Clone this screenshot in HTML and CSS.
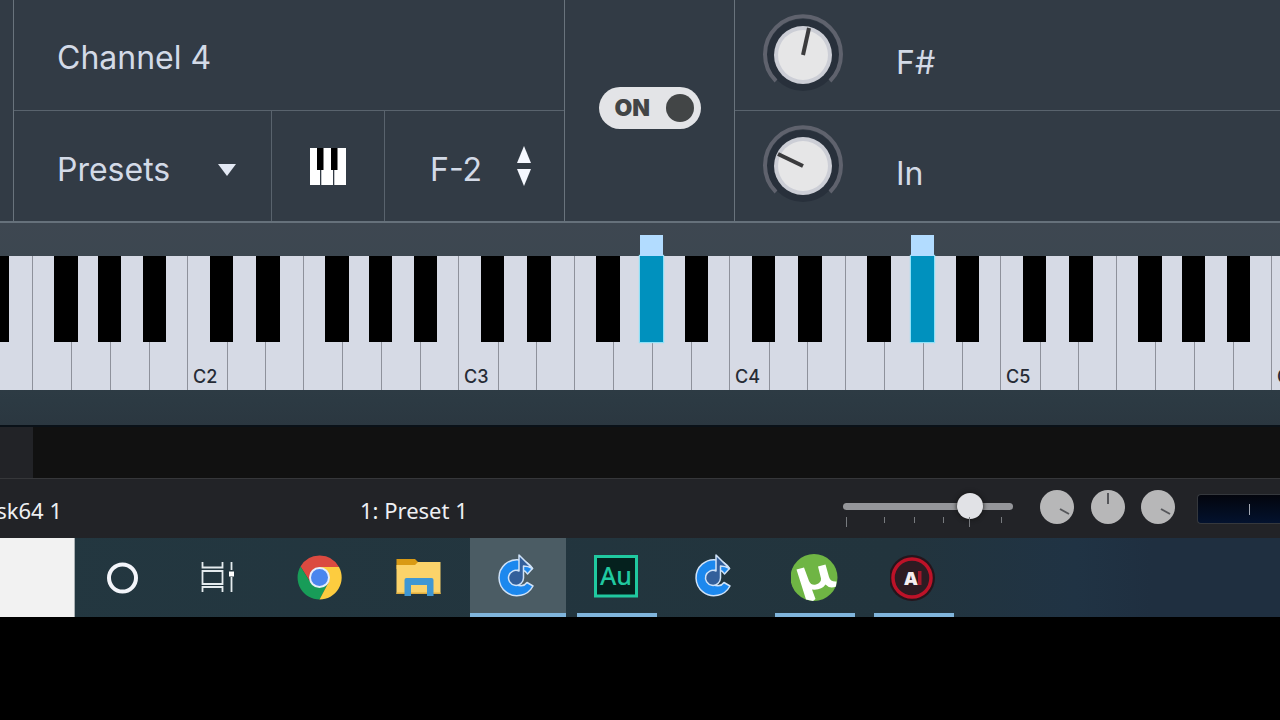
FILE: index.html
```html
<!DOCTYPE html>
<html lang="en">
<head>
<meta charset="utf-8">
<title>Channel 4</title>
<link rel="stylesheet" href="styles.css">
</head>
<body>
<main class="screen">
  <section class="panel">
    <div class="channel">
      <h1 class="channel-name">Channel 4</h1>
      <div class="channel-tools">
        <div class="presets">
          <select class="presets-select" aria-label="Presets"><option>Presets</option></select>
          <svg class="presets-arrow" viewBox="0 0 18 12" aria-hidden="true"><path d="M0 0H18L9 12Z"/></svg>
        </div>
        <button class="keys-button" aria-label="Keyboard">
          <svg width="36" height="37" viewBox="0 0 36 37"><path fill="#fff" d="M0 0H36V37H0Z"/><path fill="#323b45" d="M10 22h1.300v15H10zM23 22h1.300v15H23z"/><path d="M7 0h6.500v22H7zM21 0h6.500v22H21z"/></svg>
        </button>
        <div class="note">
          <input class="note-input" aria-label="Lowest note" value="F-2">
          <div class="stepper">
            <button class="step" aria-label="Note up"><svg width="14" height="17" viewBox="0 0 14 17"><path d="M7 0L14 17H0Z"/></svg></button>
            <button class="step" aria-label="Note down"><svg width="14" height="17" viewBox="0 0 14 17"><path d="M0 0H14L7 17Z"/></svg></button>
          </div>
        </div>
      </div>
    </div>
    <div class="power">
      <label class="switch"><input class="switch-box" type="checkbox" checked><span>ON</span><span class="switch-dot"></span></label>
    </div>
    <div class="dials">
      <div class="dial-row">
        <div class="dial">
          <svg width="82" height="82" viewBox="0 0 82 82" aria-hidden="true">
            <circle cx="41" cy="41" r="36" fill="#28303b"/>
            <path d="M14 67A38 38 0 1 1 68 67" fill="none" stroke="#5f626d" stroke-width="4"/>
            <circle cx="41" cy="41" r="29" fill="#ccced6"/><circle cx="41" cy="41" r="25" fill="#e6e6e7"/>
            <path d="M41 41L47 14" stroke="#3b3b3d" stroke-width="4"/>
          </svg>
          <input class="dial-input" id="key" type="range" min="0" max="11" value="6">
        </div>
        <label class="dial-text" for="key">F#</label>
      </div>
      <div class="dial-row">
        <div class="dial">
          <svg width="82" height="82" viewBox="0 0 82 82" aria-hidden="true">
            <circle cx="41" cy="41" r="36" fill="#28303b"/>
            <path d="M14 67A38 38 0 1 1 68 67" fill="none" stroke="#5f626d" stroke-width="4"/>
            <circle cx="41" cy="41" r="29" fill="#ccced6"/><circle cx="41" cy="41" r="25" fill="#e6e6e7"/>
            <path d="M41 41L16 29" stroke="#3b3b3d" stroke-width="4"/>
          </svg>
          <input class="dial-input" id="mode" type="range" value="20">
        </div>
        <label class="dial-text" for="mode">In</label>
      </div>
    </div>
  </section>

  <section class="keybed" aria-label="Piano"><div class="keys" id="keys"></div></section>

  <div class="backdrop"><div class="backdrop-side"></div></div>

  <section class="status">
    <span class="status-name">sk64 1</span>
    <span class="status-preset">1: Preset 1</span>
    <div class="volume">
      <input class="volume-input" type="range" min="0" max="100" value="79" aria-label="Volume">
      <svg class="volume-ticks" width="170" height="10" viewBox="0 0 170 10" aria-hidden="true"><path d="M3.500 0v10M41.500 0v6M71.500 0v6M100.500 0v6M126.500 0v10M158.500 0v6" stroke="#777a7e"/></svg>
    </div>
    <div class="mini-dials">
      <button class="mini" aria-label="Gain"><svg width="34" height="34" viewBox="0 0 34 34"><path d="M20 19L29 24"/></svg></button>
      <button class="mini" aria-label="Pan"><svg width="34" height="34" viewBox="0 0 34 34"><path d="M17 3V14"/></svg></button>
      <button class="mini" aria-label="Send"><svg width="34" height="34" viewBox="0 0 34 34"><path d="M20 19L29 24"/></svg></button>
    </div>
    <div class="meter"><span class="meter-mark"></span></div>
  </section>

  <nav class="taskbar" aria-label="Taskbar">
    <input class="search" aria-label="Search">
    <div class="tasks">
      <button class="task" aria-label="Cortana"><svg viewBox="0 0 48 48"><circle cx="24.500" cy="25" r="13.500" fill="none" stroke="#f3f5fa" stroke-width="4"/></svg></button>
      <button class="task" aria-label="Task view"><svg viewBox="0 0 48 48"><path fill="none" stroke="#e4ebee" stroke-width="1.800" d="M5.500 9v5.500H25.500V9M5.500 18H25.500V31H5.500ZM5.500 39v-5H25.500V39M34.500 9V17M34.500 24V39"/><path fill="#fff" d="M32 18.500h5v5h-5z"/></svg></button>
      <button class="task" aria-label="Chrome"><svg viewBox="0 0 48 48"><g transform="translate(23.500 24.500)"><path fill="#db4a40" d="M-19-11A22 22 0 0 1 19.500-10.500L0-10.500L-9 5Z"/><path fill="#189c58" d="M-19-11A22 22 0 0 0 0 22L9 5L-9 5Z"/><path fill="#fdcc3f" d="M19.500-10.500A22 22 0 0 1 0 22L9 5L0-10.500Z"/><circle r="10.500" fill="#e6eefa"/><circle r="8.500" fill="#4a86ee"/></g></svg></button>
      <button class="task" aria-label="File Explorer"><svg viewBox="0 0 48 48"><path fill="#d99a14" d="M1.500 6H20l3 3v7H1.500z"/><path fill="#fbd36a" d="M1.500 12H20l3-3H45.500V41H1.500z"/><path fill="#e0ad3e" d="M1.500 39.500h44V41h-44z"/><path fill="#3f97d3" d="M9.500 43V27q0-2 2-2h25q2 0 2 2V43H32V32H16V43z"/></svg></button>
      <button class="task task-active task-running" aria-label="Cakewalk"><svg viewBox="0 0 48 48"><g stroke="#cfe2f8" stroke-width="1.500" stroke-linejoin="round"><path fill="#1c88ee" d="M39 33A18 18 0 1 1 38.500 15.500L33.500 21A8 8 0 1 0 33 29.500Z"/><path fill="#335f9b" d="M25 2L38.500 15.500Q34 13 29.500 13V25A7.500 7.500 0 1 1 25 18Z"/></g></svg></button>
      <button class="task task-running" aria-label="Audition"><svg viewBox="0 0 48 48"><path fill="#05211e" stroke="#20c9a0" stroke-width="3" d="M2.500 3.500H43.500V43H2.500z"/><text class="audition" x="23" y="32" text-anchor="middle">Au</text></svg></button>
      <button class="task" aria-label="Cakewalk project"><svg viewBox="0 0 48 48"><g transform="translate(-1 0)" stroke="#cfe2f8" stroke-width="1.500" stroke-linejoin="round"><path fill="#1c88ee" d="M39 33A18 18 0 1 1 38.500 15.500L33.500 21A8 8 0 1 0 33 29.500Z"/><path fill="#335f9b" d="M25 2L38.500 15.500Q34 13 29.500 13V25A7.500 7.500 0 1 1 25 18Z"/></g></svg></button>
      <button class="task task-running" aria-label="uTorrent"><svg viewBox="0 0 48 48"><circle cx="23" cy="24.500" r="23.500" fill="#6fb544"/><path fill="#fff" d="M5.500 16.500L13 14.500L18 28Q20.500 33 25 31.500Q30.500 29.500 30 25.500L27 13.500L34.500 11.500L38 24Q39.500 29 45.500 28.500L45 33.500Q38.500 36 34.500 31.500Q30.500 37.500 21 36.500L24.500 46L22 48L15 46.500Z"/></svg></button>
      <button class="task task-running" aria-label="Recorder"><svg viewBox="0 0 48 48"><circle cx="22" cy="25" r="23" fill="#25151c"/><circle cx="22" cy="25" r="19" fill="#2d1b22" stroke="#bd1228" stroke-width="3.500"/><path fill="#a3182a" d="M28 18h3.500v14H28z"/><text class="recorder" x="21" y="32" text-anchor="middle">A</text></svg></button>
    </div>
  </nav>
</main>
<script src="piano.js"></script>
</body>
</html>
```
FILE: styles.css
```css
* { box-sizing: border-box; }
body { margin: 0; background: #000; }
button, input, select { font: inherit; color: inherit; margin: 0; padding: 0; border: 0; border-radius: 0; background: none; appearance: none; outline: 0; }
svg { display: block; }

.screen { min-height: 100vh; overflow: hidden; background: #000; }

.panel {
  display: grid;
  grid-template-columns: 551px 170px 1fr;
  padding-left: 13px;
  background: #323b45;
  border-bottom: 2px solid #66717b;
  color: #d3dae7;
  font: 400 32px/40px Inter, "Open Sans", sans-serif;
}
.channel, .power, .dials { border-left: 1px solid #69737c; }
.channel-name { margin: 0; padding: 38px 43px 32px; font-size: 32px; font-weight: 400; line-height: 40px; }
.channel-tools { display: grid; grid-template-columns: 257px 113px minmax(0, 1fr); height: 111px; border-top: 1px solid #59636d; }
.presets { display: flex; align-items: center; padding: 8px 35px 0 43px; }
.presets-select { flex: 1; height: 40px; }
.presets-arrow { width: 18px; height: 12px; fill: #e3e9f4; }
.keys-button { display: flex; align-items: center; justify-content: center; border-left: 1px solid #59636d; }
.note { display: flex; align-items: center; border-left: 1px solid #59636d; padding: 8px 33px 0 45px; }
.note-input { flex: 1; min-width: 0; height: 40px; }
.stepper { flex: none; display: flex; flex-direction: column; gap: 6px; padding-bottom: 8px; }
.step { fill: #f5f8ff; }

.power { display: flex; align-items: center; justify-content: center; padding-bottom: 6px; }
.switch { display: flex; align-items: center; justify-content: space-between; width: 102px; height: 42px; padding: 0 7px 0 16px; border-radius: 21px; background: #e3e4e7; color: #424546; font-size: 23px; font-weight: 900; }
.switch-box { position: absolute; opacity: 0; }
.switch-dot { width: 28px; height: 28px; border-radius: 50%; background: #424546; }

.dial-row { display: flex; align-items: center; gap: 52px; height: 110px; padding-left: 27px; }
.dial-row + .dial-row { height: 111px; border-top: 1px solid #59636d; }
.dial { position: relative; }
.dial-input { position: absolute; inset: 0; width: 100%; opacity: 0; }
.dial-text { padding-top: 16px; }

.keybed { padding: 33px 0 35px; background: linear-gradient(#3e4751, #3c4750 20%, #2c3a43 88%, #2b3740); }
.keys { display: flex; margin-left: -84px; }
.octave { position: relative; flex: none; display: grid; grid-template-columns: 40px 38px 38px 39px 39px 39px 38px; height: 134px; }
.white { display: flex; align-items: flex-end; padding: 0 0 2px 5px; background: #d6dae5; border-left: 1px solid #8e919b; color: #262b35; font: 500 18px/22px Inter, "Open Sans", sans-serif; }
.black { position: absolute; top: 0; width: 23px; height: 86px; background: #000; }
.black-wide { width: 24px; }
.black-cs { left: 23px; }
.black-ds { left: 69px; }
.black-fs { left: 138px; }
.black-gs { left: 182px; }
.black-as { left: 227px; }
.pressed { background: #0091be; box-shadow: 0 0 1px 1px #8fe1f8; }
.pressed::before { content: ""; position: absolute; left: 0; bottom: 100%; width: 100%; height: 21px; background: #b2dcff; }

.backdrop { height: 53px; background: #111; border-top: 2px solid #0a1118; }
.backdrop-side { width: 33px; height: 100%; background: #222327; }

.status { display: grid; grid-template-columns: 360px 1fr 170px 135px 132px; height: 60px; background: #222327; border-top: 1px solid #36373a; color: #eef0f3; font: 400 22px/32px "Noto Sans", "Open Sans", sans-serif; }
.status-name { align-self: center; display: flex; justify-content: flex-end; width: 62px; padding-top: 2px; white-space: nowrap; }
.status-preset { align-self: center; padding-top: 2px; }
.volume { display: flex; flex-direction: column; padding-top: 14px; }
.volume-input { width: 100%; height: 26px; }
.volume-input::-webkit-slider-runnable-track { height: 7px; border-radius: 4px; background: #95969a; }
.volume-input::-webkit-slider-thumb { appearance: none; width: 26px; height: 26px; margin-top: -10px; border-radius: 50%; background: #e1e2e6; box-shadow: 0 0 5px #111; }
.volume-ticks { width: 100%; margin-top: -2px; }
.mini-dials { display: flex; justify-content: space-between; align-items: flex-start; width: 135px; margin: 11px 0 0 27px; }
.mini { width: 34px; height: 34px; border-radius: 50%; background: #b7b7b8; stroke: #55565a; stroke-width: 2; }
.meter { display: flex; align-items: center; height: 30px; margin: 15px 0 0 49px; padding-left: 51px; border: 1px solid #35383d; border-right: 0; border-radius: 4px 0 0 4px; background: linear-gradient(#03050d, #03122e); }
.meter-mark { width: 1px; height: 11px; background: #a4a9b4; }

.taskbar { display: flex; height: 79px; background: linear-gradient(90deg, #233740, #22343d 70%, #203344 84%, #1f2f40 90%); }
.search { width: 75px; background: #f2f2f2; border-right: 1px solid #aab1b3; }
.tasks { display: flex; gap: 3px; margin-left: -1px; }
.task { position: relative; display: flex; justify-content: center; width: 96px; padding-top: 15px; }
.task svg { width: 48px; height: 48px; }
.task-active { background: #4b5c64; }
.task-running::after { content: ""; position: absolute; left: 8px; right: 8px; bottom: 0; height: 4px; background: #80b5dc; }
.task-active::after { left: 0; right: 0; }
.audition { font: 500 25px "Noto Sans", sans-serif; fill: #20c9a0; }
.recorder { font: 900 18px Inter, sans-serif; fill: #f4eef0; }
```
FILE: piano.js
```js
const keys = document.getElementById("keys");
const blacks = ["cs", "ds", "fs", "gs", "as"];
const wide = ["ds", "fs"];
const pressed = ["3gs", "4gs"];

for (let octave = 1; octave <= 6; octave++) {
  const group = document.createElement("div");
  group.className = "octave";
  for (const name of "CDEFGAB") {
    const key = document.createElement("button");
    key.className = "white";
    key.setAttribute("aria-label", name + octave);
    if (name === "C" && octave > 1) key.textContent = name + octave;
    group.append(key);
  }
  for (const name of blacks) {
    const key = document.createElement("button");
    key.className = "black black-" + name;
    key.setAttribute("aria-label", name[0].toUpperCase() + "#" + octave);
    if (wide.includes(name)) key.classList.add("black-wide");
    if (pressed.includes(octave + name)) key.classList.add("pressed");
    group.append(key);
  }
  keys.append(group);
}
```
